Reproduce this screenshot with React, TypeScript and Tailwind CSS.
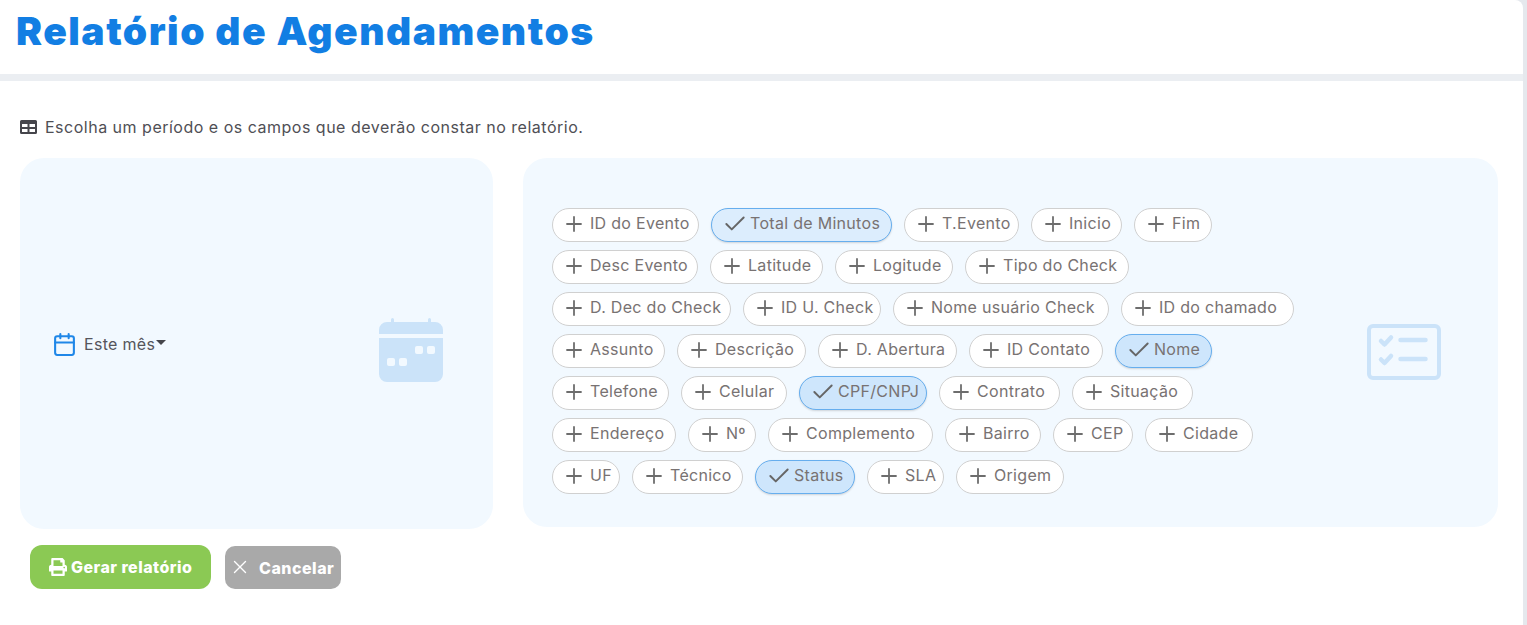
import { Calendar, Check, Plus, X } from 'lucide-react';
import { FaPrint } from 'react-icons/fa';

const fields = [
  { label: 'ID do Evento', width: 'w-[147px]' },
  { label: 'Total de Minutos', width: 'w-[181px]', selected: true, light: true },
  { label: 'T.Evento', width: 'w-[115px]' },
  { label: 'Inicio', width: 'w-[91px]' },
  { label: 'Fim', width: 'w-[78px]' },
  { label: 'Desc Evento', width: 'w-[146px]' },
  { label: 'Latitude', width: 'w-[113px]' },
  { label: 'Logitude', width: 'w-[118px]' },
  { label: 'Tipo do Check', width: 'w-[164px]' },
  { label: 'D. Dec do Check', width: 'w-[179px]' },
  { label: 'ID U. Check', width: 'w-[138px]' },
  { label: 'Nome usuário Check', width: 'w-[216px]' },
  { label: 'ID do chamado', width: 'w-[173px]' },
  { label: 'Assunto', width: 'w-[113px]' },
  { label: 'Descrição', width: 'w-[129px]' },
  { label: 'D. Abertura', width: 'w-[139px]' },
  { label: 'ID Contato', width: 'w-[134px]' },
  { label: 'Nome', width: 'w-[97px]', selected: true },
  { label: 'Telefone', width: 'w-[117px]' },
  { label: 'Celular', width: 'w-[106px]' },
  { label: 'CPF/CNPJ', width: 'w-[128px]', selected: true },
  { label: 'Contrato', width: 'w-[121px]' },
  { label: 'Situação', width: 'w-[121px]' },
  { label: 'Endereço', width: 'w-[124px]' },
  { label: 'Nº', width: 'w-[68px]' },
  { label: 'Complemento', width: 'w-[165px]' },
  { label: 'Bairro', width: 'w-[96px]' },
  { label: 'CEP', width: 'w-[80px]' },
  { label: 'Cidade', width: 'w-[108px]' },
  { label: 'UF', width: 'w-[68px]' },
  { label: 'Técnico', width: 'w-[111px]' },
  { label: 'Status', width: 'w-[100px]', selected: true },
  { label: 'SLA', width: 'w-[77px]' },
  { label: 'Origem', width: 'w-[108px]' },
];

const Chip = ({ label, width, selected, light }: { label: string; width: string; selected?: boolean; light?: boolean }) => {
  return (
    <button
      className={`${width} h-[34px] pb-[2px] flex items-center rounded-full border text-[16px] tracking-[0.3px] whitespace-nowrap text-[#787272] ${
        selected
          ? `pl-[10px] gap-[2px] border-[#66aeee] shadow-[0_1px_2px_rgba(0,0,0,0.15)] ${light ? 'bg-[#dcedfd]' : 'bg-[#cee6fc]'}`
          : 'pl-[9px] gap-[4px] bg-white border-[#d0d0d0]'
      }`}
    >
      {selected ? (
        <Check className="w-[26px] h-[26px] shrink-0 text-[#666666]" strokeWidth={1.8} />
      ) : (
        <Plus className="w-6 h-6 shrink-0 text-[#6d6d6d]" strokeWidth={1.8} />
      )}
      <span className="mb-[2px]">{label}</span>
    </button>
  );
};

const App = () => {
  return (
    <div className="h-[625px] overflow-hidden bg-[#e5e8ed] pr-[4px] font-['Inter','Liberation_Sans',sans-serif]">
      <div className="h-full bg-white rounded-tr-[8px]">
        {/* Header */}
        <header className="h-[81px] border-b-[7px] border-[#ebeef2] pl-[16px] pt-[7px]">
          <h1 className="text-[39px] leading-[48px] font-black tracking-[1.5px] text-[#127ee3]">
            Relatório de Agendamentos
          </h1>
        </header>

        <div className="px-[20px]">
          {/* Intro */}
          <div className="h-[77px] pt-[15px] flex items-center gap-[8px] text-[16px] tracking-[0.5px] text-[#4f4f55]">
            <svg viewBox="0 0 17 14" className="w-[17px] h-[14px] shrink-0">
              <path
                fill="#45454b"
                fillRule="evenodd"
                d="M1.5 0h14A1.5 1.5 0 0 1 17 1.5v11a1.5 1.5 0 0 1-1.5 1.5h-14A1.5 1.5 0 0 1 0 12.5v-11A1.5 1.5 0 0 1 1.5 0zM2 4v3h5.5V4zm7.5 0v3H15V4zM2 9v3h5.5V9zm7.5 0v3H15V9z"
              />
            </svg>
            <span>Escolha um período e os campos que deverão constar no relatório.</span>
          </div>

          {/* Panels */}
          <div className="flex items-start gap-[30px]">
            <section className="w-[473px] h-[371px] rounded-[24px] bg-[#f2f9ff] flex items-center justify-between pl-[32px] pr-[50px]">
              <div className="mt-[1px] flex items-center text-[16px] tracking-[0.3px] text-[#55555c]">
                <Calendar className="w-[25px] h-[25px] text-[#1f87e8] mr-[7px]" strokeWidth={2} />
                <span>Este mês</span>
                <span className="mb-[3px] ml-[1px] border-x-[5px] border-t-[5px] border-x-transparent border-t-[#45454b]" />
              </div>
              <svg viewBox="0 0 64 64" className="mt-[13px] w-[64px] h-[64px]">
                <path
                  fill="#cbe3f9"
                  fillRule="evenodd"
                  d="M8 4h4V1.5a1.5 1.5 0 0 1 3 0V4h34V1.5a1.5 1.5 0 0 1 3 0V4h4a8 8 0 0 1 8 8v4H0v-4a8 8 0 0 1 8-8zM0 20h64v36a8 8 0 0 1-8 8H8a8 8 0 0 1-8-8zm38 8a2 2 0 0 0-2 2v4a2 2 0 0 0 2 2h4a2 2 0 0 0 2-2v-4a2 2 0 0 0-2-2zm12 0a2 2 0 0 0-2 2v4a2 2 0 0 0 2 2h4a2 2 0 0 0 2-2v-4a2 2 0 0 0-2-2zM10 40a2 2 0 0 0-2 2v4a2 2 0 0 0 2 2h4a2 2 0 0 0 2-2v-4a2 2 0 0 0-2-2zm12 0a2 2 0 0 0-2 2v4a2 2 0 0 0 2 2h4a2 2 0 0 0 2-2v-4a2 2 0 0 0-2-2z"
                />
              </svg>
            </section>

            <section className="w-[975px] h-[369px] pt-[16px] rounded-[24px] bg-[#f2f9ff] flex items-center justify-between pl-[29px] pr-[57px]">
              <div className="w-[760px] flex flex-wrap gap-x-[12px] gap-y-[8px]">
                {fields.map((f) => (
                  <Chip key={f.label} {...f} />
                ))}
              </div>
              <svg viewBox="0 0 74 56" className="mt-[2px] w-[74px] h-[56px]" fill="none" stroke="#cbe3f9" strokeLinecap="round" strokeLinejoin="round">
                <rect x="2" y="2" width="70" height="52" rx="4" strokeWidth="4" />
                <path d="M14 17l3.5 3.5 6.5-7M14 35.5l3.5 3.5 6.5-7" strokeWidth="4.5" />
                <path d="M33.5 16h25M33.5 35h25" strokeWidth="4.5" />
              </svg>
            </section>
          </div>

          {/* Actions */}
          <div className="flex items-end gap-[14px] ml-[10px] mt-[16px]">
            <button className="w-[181px] h-[44px] pl-[19px] pb-[1px] rounded-[12px] bg-[#8bc954] flex items-center gap-[4px] text-[16px] tracking-[0.45px] font-extrabold text-white">
              <FaPrint className="w-[18px] h-[18px]" />
              Gerar relatório
            </button>
            <button className="w-[116px] h-[43px] rounded-[10px] bg-[#a9a9a9] flex items-center pl-[4px] pt-[1px] text-[16px] tracking-[0.5px] font-extrabold text-white">
              <X className="w-[22px] h-[22px] mr-[8px] -mt-[3px]" strokeWidth={1.5} />
              Cancelar
            </button>
          </div>
        </div>
      </div>
    </div>
  );
};

export default App;
